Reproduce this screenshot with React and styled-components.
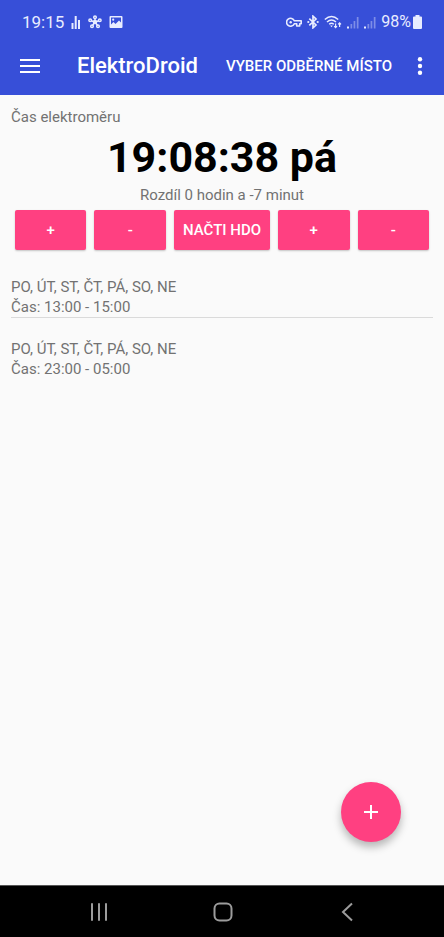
import React from "react";
import styled, { createGlobalStyle } from "styled-components";

const GlobalStyle = createGlobalStyle`
  *, *::before, *::after { box-sizing: border-box; }
  body { margin: 0; background: #fafafa; font-family: Roboto, "Noto Sans", sans-serif; }
  button { font-family: inherit; border: 0; padding: 0; margin: 0; cursor: pointer; }
  svg { display: block; flex: none; }
`;

const Screen = styled.div`
  display: flex;
  flex-direction: column;
  min-height: 100vh;
  background: #fafafa;
`;

const Header = styled.header`
  background: #374fd8;
  color: #fff;
  padding-bottom: 8px;
`;

const StatusBar = styled.div`
  display: flex;
  align-items: center;
  justify-content: space-between;
  height: 44px;
  padding: 0 22px;
  font-size: 16px;
  line-height: 20px;
  color: #e8ecff;
`;

const StatusGroup = styled.div`
  display: flex;
  align-items: center;
  gap: ${(p) => p.$gap}px;
`;

const Time = styled.span`
  font-size: 17px;
`;

const BatteryLevel = styled.span`
  display: flex;
  align-items: center;
  gap: 2px;
`;

const Toolbar = styled.div`
  display: flex;
  align-items: center;
  height: 43px;
  padding: 0 2px 0 8px;
`;

const ToolbarButton = styled.button`
  display: grid;
  place-items: center;
  width: 44px;
  height: 43px;
  background: none;
  color: #fff;
`;

const Title = styled.h1`
  flex: 1;
  margin: 0 0 0 25px;
  font-size: 22px;
  line-height: 28px;
  font-weight: 500;
  white-space: nowrap;
`;

const ToolbarAction = styled.button`
  height: 43px;
  margin-right: 6px;
  background: none;
  color: #fff;
  font-size: 15px;
  font-weight: 500;
  white-space: nowrap;
`;

const Main = styled.main`
  position: relative;
  flex: 1;
  padding: 12px 11px;
  color: #727272;
  font-size: 15px;
  line-height: 20px;
`;

const Label = styled.p`
  margin: 0;
`;

const Clock = styled.div`
  color: #000;
  font-size: 43px;
  line-height: 60px;
  font-weight: 700;
  text-align: center;
`;

const Difference = styled.p`
  margin: 0;
  line-height: 16px;
  text-align: center;
`;

const Controls = styled.div`
  display: grid;
  grid-template-columns: 1fr 1fr auto 1fr 1fr;
  gap: 8px;
  padding: 7px 4px 0;
`;

const ControlButton = styled.button`
  min-width: 0;
  height: 40px;
  padding: 0 9px;
  border-radius: 2px;
  background: #ff4081;
  box-shadow: 0 1px 2px rgba(0, 0, 0, 0.22);
  color: #fff;
  font-size: 15px;
  font-weight: 500;
  white-space: nowrap;
`;

const Schedule = styled.ul`
  list-style: none;
  margin: 27px 0 0;
  padding: 0;
`;

const Slot = styled.li`
  & + & {
    border-top: 1px solid #dadada;
    padding-top: 21px;
  }
`;

const SlotLine = styled.div``;

const AddButton = styled.button`
  position: absolute;
  right: 43px;
  bottom: 43px;
  display: grid;
  place-items: center;
  width: 60px;
  height: 60px;
  border-radius: 50%;
  background: #ff4081;
  box-shadow: 0 5px 9px rgba(0, 0, 0, 0.28);
  color: #fff;
`;

const NavBar = styled.nav`
  display: flex;
  align-items: center;
  justify-content: space-around;
  height: 52px;
  padding: 0 35px 0 37px;
  background: #000;
  border-top: 1px solid #555;
`;

const NavButton = styled.button`
  display: grid;
  place-items: center;
  width: 64px;
  height: 50px;
  background: none;
  color: #9c9c9c;
`;

const BarsIcon = () => (
  <svg width="10" height="15" viewBox="0 0 10 15" fill="currentColor">
    <path d="M.5 8h2v6h-2zM3.700 1h2v13h-2zM7 5h2v9H7z" />
  </svg>
);

const HubIcon = () => (
  <svg width="14" height="14" viewBox="0 0 14 14" fill="none" stroke="currentColor" strokeWidth="1.500">
    <path d="M7 7V3M7 7l4-1.300M7 7l2.500 3.500M7 7l-2.500 3.500M7 7L3 5.700" />
    <circle cx="7" cy="2.200" r="1.300" />
    <circle cx="11.800" cy="5.300" r="1.300" />
    <circle cx="10" cy="11.300" r="1.300" />
    <circle cx="4" cy="11.300" r="1.300" />
    <circle cx="2.200" cy="5.300" r="1.300" />
    <circle cx="7" cy="7" r="1.500" fill="currentColor" />
  </svg>
);

const PictureIcon = () => (
  <svg width="14" height="14" viewBox="0 0 14 14" fill="currentColor" fillRule="evenodd">
    <path d="M1.500 1h11a1 1 0 0 1 1 1v10a1 1 0 0 1-1 1h-11a1 1 0 0 1-1-1V2a1 1 0 0 1 1-1zM2 2.500V9.500L4.500 7l2 2L10 5.500l2 2v-5zM4.200 3.600a1.100 1.100 0 1 0 0 2.200 1.100 1.100 0 0 0 0-2.200z" />
  </svg>
);

const KeyIcon = () => (
  <svg width="16" height="11" viewBox="0 0 16 11" fill="none" stroke="currentColor" strokeWidth="1.600">
    <path d="M8.300 3.800H15.200V6.700H13.700V9H10.700V6.700H8.300A4 4 0 1 1 8.300 3.800Z" strokeLinejoin="round" />
    <circle cx="4.700" cy="5.300" r="1.200" fill="currentColor" stroke="none" />
  </svg>
);

const BluetoothIcon = () => (
  <svg width="12" height="14" viewBox="0 0 12 14" fill="none" stroke="currentColor" strokeWidth="1.700">
    <path d="M2.300 3.700L9 10L6 12.800V1.200L9 4L2.300 10.300" />
    <circle cx="1.300" cy="7" r="1.100" fill="currentColor" stroke="none" />
    <circle cx="10.700" cy="7" r="1.100" fill="currentColor" stroke="none" />
  </svg>
);

const WifiIcon = () => (
  <svg width="18" height="14" viewBox="0 0 18 14" fill="none" stroke="currentColor" strokeWidth="1.500">
    <path d="M.8 4.500Q7.500-1.500 14.200 4.500M3 7Q7.500 3 12 7M5.200 9.200Q7.500 7.200 9.800 9.200" />
    <path d="M6.200 10.500h2.600L7.500 12.200z" fill="currentColor" stroke="none" />
    <path d="M11.600 8.500v4M10.200 11.200l1.400 1.500 1.400-1.500M15.600 12V8M14.200 9.300l1.400-1.500L17 9.300" strokeWidth="1.200" />
  </svg>
);

const SignalIcon = () => (
  <svg width="12" height="13" viewBox="0 0 12 13" fill="currentColor">
    <path d="M0 10.500h2v2H0z" />
    <path d="M3.500 8h1.700v4.500H3.500zM6.600 5h1.700v7.500H6.600zM9.800 1h1.700v11.500H9.800z" opacity=".4" />
  </svg>
);

const BatteryIcon = () => (
  <svg width="9" height="14" viewBox="0 0 9 14" fill="currentColor">
    <path d="M2.500 0h4v1.500H8a1 1 0 0 1 1 1V13a1 1 0 0 1-1 1H1a1 1 0 0 1-1-1V2.500a1 1 0 0 1 1-1h1.500z" />
  </svg>
);

const MenuIcon = () => (
  <svg width="20" height="14" viewBox="0 0 20 14" fill="currentColor">
    <path d="M0 0h20v2H0zM0 6h20v2H0zM0 12h20v2H0z" />
  </svg>
);

const MoreIcon = () => (
  <svg width="6" height="18" viewBox="0 0 6 18" fill="currentColor">
    <circle cx="3" cy="2.300" r="2.200" />
    <circle cx="3" cy="9" r="2.200" />
    <circle cx="3" cy="15.700" r="2.200" />
  </svg>
);

const PlusIcon = () => (
  <svg width="14" height="14" viewBox="0 0 14 14" stroke="currentColor" strokeWidth="2">
    <path d="M7 0v14M0 7h14" />
  </svg>
);

const RecentsIcon = () => (
  <svg width="20" height="20" viewBox="0 0 20 20" stroke="currentColor" strokeWidth="2" strokeLinecap="round">
    <path d="M3 2v16M10 2v16M17 2v16" />
  </svg>
);

const HomeIcon = () => (
  <svg width="20" height="20" viewBox="0 0 20 20" fill="none" stroke="currentColor" strokeWidth="2">
    <rect x="1.500" y="1.500" width="17" height="17" rx="5" />
  </svg>
);

const BackIcon = () => (
  <svg width="20" height="20" viewBox="0 0 20 20" fill="none" stroke="currentColor" strokeWidth="2">
    <path d="M15 1.500L6 10l9 8.500" />
  </svg>
);

const controls = [
  { text: "+", label: "Přidat hodinu" },
  { text: "-", label: "Ubrat hodinu" },
  { text: "NAČTI HDO" },
  { text: "+", label: "Přidat minutu" },
  { text: "-", label: "Ubrat minutu" },
];

const slots = [
  { days: "PO, ÚT, ST, ČT, PÁ, SO, NE", time: "13:00 - 15:00" },
  { days: "PO, ÚT, ST, ČT, PÁ, SO, NE", time: "23:00 - 05:00" },
];

export default function App() {
  return (
    <Screen>
      <GlobalStyle />
      <Header>
        <StatusBar>
          <StatusGroup $gap={7}>
            <Time>19:15</Time>
            <BarsIcon />
            <HubIcon />
            <PictureIcon />
          </StatusGroup>
          <StatusGroup $gap={5}>
            <KeyIcon />
            <BluetoothIcon />
            <WifiIcon />
            <SignalIcon />
            <SignalIcon />
            <BatteryLevel>
              98%
              <BatteryIcon />
            </BatteryLevel>
          </StatusGroup>
        </StatusBar>
        <Toolbar>
          <ToolbarButton aria-label="Menu">
            <MenuIcon />
          </ToolbarButton>
          <Title>ElektroDroid</Title>
          <ToolbarAction>VYBER ODBĚRNÉ MÍSTO</ToolbarAction>
          <ToolbarButton aria-label="Další možnosti">
            <MoreIcon />
          </ToolbarButton>
        </Toolbar>
      </Header>
      <Main>
        <Label>Čas elektroměru</Label>
        <Clock>19:08:38 pá</Clock>
        <Difference>Rozdíl 0 hodin a -7 minut</Difference>
        <Controls>
          {controls.map((c, i) => (
            <ControlButton key={i} aria-label={c.label}>
              {c.text}
            </ControlButton>
          ))}
        </Controls>
        <Schedule>
          {slots.map((s) => (
            <Slot key={s.time}>
              <SlotLine>{s.days}</SlotLine>
              <SlotLine>Čas: {s.time}</SlotLine>
            </Slot>
          ))}
        </Schedule>
        <AddButton aria-label="Přidat">
          <PlusIcon />
        </AddButton>
      </Main>
      <NavBar>
        <NavButton aria-label="Poslední aplikace">
          <RecentsIcon />
        </NavButton>
        <NavButton aria-label="Domů">
          <HomeIcon />
        </NavButton>
        <NavButton aria-label="Zpět">
          <BackIcon />
        </NavButton>
      </NavBar>
    </Screen>
  );
}
